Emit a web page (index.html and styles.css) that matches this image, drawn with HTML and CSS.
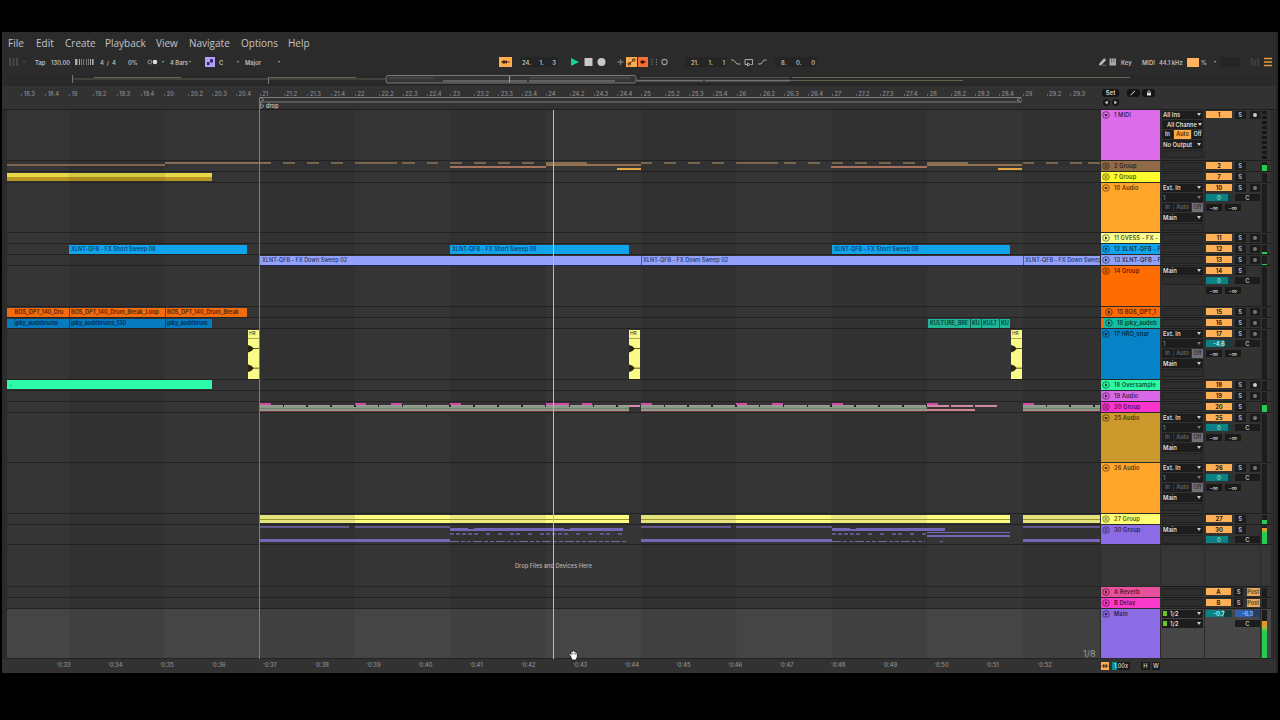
FILE: index.html
```html
<!DOCTYPE html>
<html lang="en">
<head>
<meta charset="utf-8">
<title>Arrangement</title>
<link rel="stylesheet" href="styles.css">
</head>
<body>
<div class="app">
  <nav class="menu"><span>File</span><span>Edit</span><span>Create</span><span>Playback</span><span>View</span><span>Navigate</span><span>Options</span><span>Help</span></nav>
  <div class="toolbar">
    <svg class="dim" width="10" height="8"><path d="M0 0h2v8H0zM3.500 0h2v8h-2zM7 0h2v8H7z" fill="#484848"/></svg>
    <i class="arr dimmed"></i>
    <span>Tap</span>
    <span>130.00</span>
    <svg width="9" height="6"><path d="M0 0h2.500v6H0zM4 0h1v6H4zM6 0h.6v6H6zM8 0h.6v6H8z" fill="#aaa"/></svg>
    <svg width="9" height="6"><path d="M0 0h.6v6H0zM2 0h.6v6H2zM4 0h1v6H4zM6 0h1.600v6H6z" fill="#aaa"/></svg>
    <span>4&nbsp; / &nbsp;4</span>
    <span>0%</span>
    <svg width="12" height="6"><circle cx="2.800" cy="3" r="1.900" fill="none" stroke="#aaa" stroke-width=".8"/><circle cx="8" cy="3" r="2.300" fill="#ddd"/></svg>
    <i class="arr"></i>
    <span>4 Bars</span>
    <i class="arr"></i>
    <svg width="10" height="10"><path d="M0 0h10v10H0z" fill="#b39dff"/><path d="M2 5h2.500v3H2zM5 2.200h3v3.300H5z" fill="#2d2466"/></svg>
    <span>C</span>
    <i class="arr"></i>
    <span>Major</span>
    <i class="arr"></i>
    <svg width="13" height="10"><path d="M0 0h13v10H0z" fill="#ffab52"/><path d="M2 5h9" stroke="#6b3c10" stroke-width="1"/><circle cx="5" cy="5" r="1.700" fill="#3a2208"/><path d="M7.500 3.500v3" stroke="#3a2208"/></svg>
    <span class="field pos"><b>24.</b><b>1.</b><b>3</b></span>
    <svg width="12" height="10"><path d="M2 1l8 4-8 4z" fill="#16d38b"/></svg>
    <svg width="9" height="10"><path d="M.5 1h8v8h-8z" fill="#c8c8c8"/></svg>
    <svg width="9" height="10"><circle cx="4.500" cy="5" r="4" fill="#c8c8c8"/></svg>
    <svg width="9" height="10"><path d="M1.500 5h6M4.500 2v6" stroke="#777" stroke-width="1.300"/></svg>
    <svg width="11" height="10"><path d="M0 0h11v10H0z" fill="#ffab52"/><path d="M3 7L7.500 3" stroke="#5b3510" stroke-width="1"/><circle cx="3.200" cy="7" r="1.300" fill="none" stroke="#5b3510"/><circle cx="7.800" cy="3" r="1.300" fill="none" stroke="#5b3510"/></svg>
    <svg width="10" height="10"><path d="M0 0h10v10H0z" fill="#f4713b"/><path d="M2 5h6" stroke="#5b1c08"/><circle cx="4.500" cy="5" r="1.800" fill="#3b1205"/></svg>
    <svg width="9" height="10"><path d="M2 2v6M6.500 2v6" fill="none" stroke="#777" stroke-dasharray="1.500 1"/></svg>
    <svg width="8" height="10"><circle cx="3.500" cy="5" r="2.600" fill="none" stroke="#999" stroke-width="1.100"/></svg>
    <span class="field pos wide"><b>21.</b><b>1.</b><b>1</b></span>
    <svg width="10" height="10"><path d="M0 3h2.500L6 7h3.500" fill="none" stroke="#aaa"/></svg>
    <svg width="10" height="10"><path d="M3 7.500H1V2.500h7.500v5H6.500M3.500 6v3l2.500-1.500z" fill="none" stroke="#aaa"/></svg>
    <svg width="10" height="10"><path d="M1 7h3L7 3h2.500" fill="none" stroke="#aaa"/></svg>
    <span class="field pos wide"><b>8.</b><b>0.</b><b>0</b></span>
    <svg width="8" height="10"><path d="M0 8h2l5-5-2-1.500L1 6zM3 8.300h4" fill="#bbb" stroke="#bbb" stroke-width=".5"/></svg>
    <svg width="8" height="10"><path d="M.5 1.500h6.500v7H.5z" fill="#aaa"/><path d="M2.600 2v3.500M4.900 2v3.500" stroke="#555" stroke-width=".8"/></svg>
    <span>Key</span>
    <span>MIDI</span>
    <span>44.1 kHz</span>
    <i class="cpu"></i>
    <span>%</span>
    <i class="arr"></i>
    <i class="field blank"></i>
    <svg width="9" height="8"><path d="M1 0v8M4 2v6M7 0v8" stroke="#5a4a5a" stroke-width="1"/></svg>
    <svg width="8" height="10"><path d="M0 1.500h8M0 5h8M0 8.500h8" stroke="#e59a3a" stroke-width="1.300"/></svg>
  </div>
  <svg class="overview" width="1272" height="12" viewBox="2 74 1272 12">
    <path d="M7 75h379v9H7zM637 75h635v9H637z" fill="#292929"/>
    <path d="M73 79h312M637 81h153" stroke="#484b42" stroke-width="1.500"/>
    <path d="M94 77.500h87M268 77.500h88M792 77.500h338" stroke="#646a54" stroke-width="1"/>
    <path d="M790 80.500h173" stroke="#5f664e"/>
    <path d="M443 81h84M529 81h86M637 80.500h66M705 80.500h85" stroke="#716e77" stroke-width="1.500"/>
    <path d="M389 78h44M530 78h100M640 77.500h150" stroke="#525155"/>
    <path d="M72.500 75v8M268.500 77v7" stroke="#777"/>
    <path d="M509.500 75v8" stroke="#aaa"/>
    <rect x="386" y="75.500" width="250" height="7.500" rx="2" fill="#77777722" stroke="#777"/>
    <path d="M7 84.500h1265" stroke="#242424"/>
  </svg>
  <div class="ruler">
    <div class="ticks" id="ticks"></div>
    <div class="loop"><svg width="763" height="8"><path d="M.5 8V1.500h761.500v4.500H.5" fill="none" stroke="#7b7b7b"/><path d="M1 1.500l4 2.200-4 2.300M762 1.500l-4 2.200 4 2.300" fill="#2a2a2a" stroke="#999" stroke-width=".8"/></svg></div>
    <div class="locator"><svg width="5" height="6"><path d="M.7.5L4 3 .7 5.500z" fill="none" stroke="#aaa" stroke-width=".8"/></svg>drop</div>
    <div class="tools">
      <div class="pills"><span class="pill set">Set</span><span class="pill"><svg width="8" height="6"><path d="M1.500 5L6 1" stroke="#ddd"/></svg></span><span class="pill"><svg width="8" height="6"><path d="M2 2.800h4v2.700H2z" fill="#ddd"/><path d="M2.900 3V1h2.200v2" fill="none" stroke="#ddd" stroke-width=".7"/></svg></span></div>
      <div class="pills nav"><span class="dot"><svg width="5" height="5"><path d="M3.700.6v3.800L.8 2.500z" fill="#ccc"/></svg></span><span class="dot"><svg width="5" height="5"><path d="M1.300.6v3.800l2.900-1.900z" fill="#ccc"/></svg></span></div>
    </div>
  </div>
  <div class="arrange">
    <div class="tracks" id="tracks"></div>
    <div class="clips" id="clips"></div>
    <div class="drop">Drop Files and Devices Here</div>
    <div class="line start"></div>
    <div class="line play"></div>
    <div class="grid-size">1/8</div>
    <svg class="hand" width="10" height="11" viewBox="0 0 10 11"><path d="M2.500 6L1 4.500 2 3.500l1 1V1.500l1-.5.800.500.700-1 1 .5.300 1 .9-.2.600.700V3l1 .3V7L8 10H4z" fill="#fff" stroke="#111" stroke-width=".8"/><path d="M4.500 2.500v2M6 2.500v2M7.500 3v2" stroke="#333" stroke-width=".5"/></svg>
  </div>
  <div class="footer">
    <div class="times" id="times"></div>
    <div class="foot-tools"><i class="foot-icon"><svg width="8" height="8"><path d="M.5 4h7M2.800 2v4M5.200 2v4" stroke="#222" stroke-width=".9"/></svg></i><span class="zoom">1.00x</span><span class="key">H</span><span class="key">W</span></div>
  </div>
</div>
<script src="app.js"></script>
</body>
</html>
```
FILE: styles.css
```css
* { box-sizing: border-box; }
body { margin: 0; width: 1280px; height: 720px; overflow: hidden; background: #000; padding: 32px 2px 0; font-family: "Inter", "Liberation Sans", sans-serif; font-size: 6px; color: #bdbdbd; }
svg { display: block; flex: none; }
.app { width: 1276px; height: 641px; background: #2b2b2c; display: flex; flex-direction: column; border-right: 2px solid #252525; overflow: hidden; }
.menu { height: 23px; padding: 0 6px 2px; display: grid; grid-template-columns: 28px 29px 40px 51px 33px 52px 47px 40px; align-items: center; font-family: "Open Sans", "Noto Sans", sans-serif; font-size: 10px; color: #c4c4c4; }
.toolbar { height: 14px; margin-left: 7px; display: grid; align-items: center; font-weight: 600; font-size: 5.800px; white-space: nowrap;
  grid-template-columns: 14px 12px 16px 24px 11px 14px 28px 19px 15px 8px 19px 16px 14px 18px 8px 33px 221px 22px 48px 15px 13px 19px 10px 12px 12px 11px 24px 46px 13px 13px 18px 324px 10px 12px 21px 17px 28px 14px 13px 6px 31px 13px 10px; }
.arr { width: 0; height: 0; border: 1.500px solid transparent; border-top: 2px solid #aaa; border-bottom: 0; }
.dimmed { opacity: .4; }
.field { background: #252525; height: 10px; }
.pos { width: 37px; display: flex; justify-content: space-between; align-items: center; padding: 0 2px 0 1px; }
.wide { width: 42px; padding-left: 6px; }
.pos b { font-weight: 600; }
.blank { width: 20px; }
.cpu { width: 12px; height: 9px; background: #ffb45c; }
.overview { margin-top: 5px; }
.ruler { height: 24px; position: relative; background: #323233; border-bottom: 1px solid #1f1f1f; }
.ticks { margin-left: 18.300px; width: 1079px; display: flex; height: 12px; align-items: flex-end; font-size: 5.700px; font-weight: 500; color: #909090; overflow: hidden; padding-bottom: 1px; }
.ticks span { flex: 0 0 23.850px; padding-left: 1px; line-height: 7px; white-space: nowrap; }
.ticks span::before { content: ""; display: inline-block; width: 1px; height: 2px; background: #666; margin-right: 1.500px; }
.loop { margin-left: 257px; height: 7px; margin-top: -2px; overflow: hidden; }
.locator { margin-left: 258px; display: flex; gap: 1px; align-items: center; height: 6px; font-size: 5.600px; font-weight: 600; color: #c0c0c0; line-height: 6px; }
.tools { position: absolute; left: 1100px; top: 2px; }
.pills { display: flex; gap: 2.500px; height: 9px; align-items: center; }
.pill { background: #151515; border-radius: 3px; height: 8px; width: 13px; display: flex; align-items: center; justify-content: center; color: #ddd; font-size: 6px; font-weight: 600; }
.set { width: 17px; margin-right: 5px; }
.nav { margin: 1px 0 0 1px; gap: 2px; }
.dot { width: 7px; height: 7px; border-radius: 4px; background: #151515; display: flex; align-items: center; justify-content: center; }
.arrange { position: relative; height: 549px; flex: none; }
.track { display: grid; grid-template-columns: 1093px 59px 43px 55px 10px; column-gap: 1px; margin-left: 5px; }
.lane { background: linear-gradient(90deg, #313132 50%, #353535 50%) 62px 0 / 190.800px 100%; border-bottom: 1px solid #222; }
.spacer .lane { border-bottom-color: #262626; }
.main .lane { background-image: linear-gradient(90deg, #404040 50%, #454545 50%); }
.head { margin-bottom: 1px; padding: .5px 0 0 1px; display: flex; align-items: flex-start; gap: 4px; overflow: hidden; white-space: nowrap; line-height: 8px; color: #000b; font-size: 5.700px; font-weight: 600; }
.head span { letter-spacing: .1px; }
.nested .head { margin-left: 3px; box-shadow: -3px 0 #f96a05; }
.io, .mix { background: #323232; border-bottom: 1px solid #1d1d1d; display: flex; flex-direction: column; overflow: hidden; }
.main .io, .main .mix, .main .meter { background: #464646; }
.spacer .io, .spacer .mix, .spacer .head, .spacer .meter { background: #363636; }
.io { padding: .5px 1px 0; gap: 1px; }
.sel { flex: none; height: 8.800px; background: #1d1d1d; display: flex; align-items: center; justify-content: space-between; padding: 0 2px 0 1px; color: #ddd; font-size: 5.900px; font-weight: 600; white-space: nowrap; }
.sel::after { content: ""; border: 2px solid transparent; border-top: 3px solid #ccc; border-bottom: 0; }
.sel.off { color: #777; }
.sel.off::after { border-top-color: #777; }
.sel.sub { padding: 0 1px 0 5px; font-size: 5.700px; }
.sel.out { justify-content: flex-start; gap: 3px; }
.sel.out::after { margin-left: auto; }
.sel.out i { width: 4px; height: 5px; background: #6cc52c; }
.empty { flex: none; height: 8.500px; background: #2d2d2d; border: 1px solid #222; }
.monitor { flex: none; height: 8.800px; display: flex; gap: 1px; font-size: 5.500px; line-height: 9px; text-align: center; color: #666; }
.monitor b { font-weight: 600; background: #1d1d1d; flex: 1; }
.monitor b:nth-child(2) { flex: 1.600; }
.monitor b:nth-child(3) { background: #70707a; color: #333; }
.monitor.on { color: #ddd; }
.monitor.on b:nth-child(2) { background: #ffab45; color: #432b0a; }
.monitor.on b:nth-child(3) { background: #1d1d1d; color: #ddd; }
.mix { padding: 1px 0 0 1px; gap: 2px; }
.mrow { display: flex; flex: none; height: 7.800px; align-items: center; line-height: 8px; text-align: center; font-size: 5.800px; font-weight: 600; color: #bbb; }
.num { width: 26px; height: 7px; line-height: 7.500px; background: #ffb057; color: #2c1c08; margin-right: 3px; font-weight: 700; }
.btn { width: 10.500px; height: 8px; background: #1c1c1c; margin-right: 4px; flex: none; }
.btn.rec { margin-right: 0; display: flex; align-items: center; justify-content: center; }
.btn.rec::before { content: ""; width: 4px; height: 4px; border-radius: 2px; background: #777; }
.btn.rec.lit::before { background: #ccc; }
.returns .btn { width: 9px; margin-right: 3.500px; }
.hidden { visibility: hidden; }
.post { width: 14px; background: #e6a95d; color: #5b3b14; height: 8px; font-size: 5.500px; }
.vol { width: 26px; height: 7px; line-height: 7.500px; background: linear-gradient(90deg, #0a8285 84%, #163d40 84%); color: #7ed6d6; margin-right: 3px; }
.vol.low { background: linear-gradient(90deg, #0a8285 68%, #163d40 68%); color: #ccefef; }
.pan { width: 25px; height: 7px; background: #1c1c1c; }
.cue { width: 25px; height: 7px; background: linear-gradient(90deg, #2d62ae 65%, #253e68 65%); color: #9ac0ff; }
.send { width: 16px; height: 7px; line-height: 7px; background: #1a1a1a; margin-right: 3px; }
.meter { background: #323232; border-bottom: 1px solid #1d1d1d; padding: 1px 1px 0; display: flex; align-items: flex-end; }
.well { width: 4.500px; height: 100%; background: #1c1c1c; display: flex; align-items: flex-end; }
.well i { width: 100%; background: #28c950; }
.well.hot i { background: linear-gradient(#e6952b 0 10%, #9dbe3b 18%, #28c950 30%); }
.well.dots { background: repeating-linear-gradient(#171717 0 3px, #303030 3px 5px); }
.clips { position: absolute; left: 0; top: 0; width: 1098px; height: 549px; overflow: hidden; }
.clip { position: absolute; overflow: hidden; white-space: nowrap; color: #001a3cbb; font-size: 5.500px; line-height: 9px; font-weight: 600; padding-left: 2px; }
.bar { position: absolute; }
.hit { position: absolute; width: 11px; background: #fafa86; color: #333; font-size: 4.800px; line-height: 7.500px; padding-left: 1px; overflow: hidden; }
.drop { position: absolute; left: 513px; top: 451px; font-size: 5.700px; line-height: 9px; color: #b5b5b5; font-weight: 500; white-space: nowrap; }
.line { position: absolute; top: 0; width: 1px; height: 549px; }
.start { left: 257px; top: -9px; height: 558px; background: #7e7e7e; }
.play { left: 551px; background: #bcbcbc; }
.grid-size { position: absolute; left: 1081px; top: 538px; font-size: 9px; color: #999; }
.hand { position: absolute; left: 566px; top: 540px; }
.footer { height: 14px; display: flex; background: #323232; }
.times { margin-left: 54.500px; width: 1044.500px; display: flex; font-size: 5.700px; font-weight: 500; color: #929292; line-height: 11px; overflow: hidden; }
.times span { flex: 0 0 51.650px; }
.times span::before { content: "'"; font-size: 5px; }
.foot-tools { display: flex; height: 8px; margin-top: 3px; font-size: 5.700px; font-weight: 500; line-height: 8px; color: #ddd; text-align: center; }
.foot-icon { width: 8px; background: #ffae4d; margin-right: 3px; }
.zoom { width: 18px; background: linear-gradient(90deg, #0a8c94 30%, #1a1a1a 30%); margin-right: 11px; }
.key { width: 8.500px; background: #1a1a1a; margin-right: 2px; }
```
FILE: app.js
```js
const ORIGIN_X = 2, ORIGIN_Y = 110;

// name, colour, height, icon, options
const tracks = [
  ["1 MIDI", "#dd6ceb", 51, "down", { io: "midi", num: "1", rec: "lit", dots: 1 }],
  ["2 Group", "#916b48", 11, "group", { num: "2", level: 65 }],
  ["7 Group", "#fffb2c", 11, "group", { num: "7" }],
  ["10 Audio", "#ffa529", 50, "down", { io: "audio", num: "10", rec: "on", vol: "0", send: 1 }],
  ["11 GVESS - FX -", "#fbff8f", 11, "right", { num: "11", rec: "on" }],
  ["12 XLNT-QFB - F", "#10a4ed", 11, "right", { num: "12", rec: "on", level: 25 }],
  ["13 XLNT-QFB - F", "#8fa2fb", 11, "right", { num: "13", rec: "on", level: 12 }],
  ["14 Group", "#ff6d02", 41, "group", { io: "group", num: "14", vol: "0", send: 1 }],
  ["15 BOS_DPT_1", "#f96a05", 11, "right", { num: "15", rec: "on", nested: 1 }],
  ["16 jpky_audeb", "#12bda1", 11, "right", { num: "16", rec: "on", nested: 1 }],
  ["17 HRO_snar", "#0683c7", 51, "down", { io: "audio", num: "17", rec: "on", vol: "-4.6", low: 1, send: 1 }],
  ["18 Oversample", "#2df8a5", 11, "right", { num: "18", rec: "lit" }],
  ["19 Audio", "#d968e8", 11, "right", { num: "19", rec: "on" }],
  ["20 Group", "#fb34cf", 11, "group", { num: "20", level: 75 }],
  ["25 Audio", "#cc992c", 50, "down", { io: "audio", num: "25", rec: "on", vol: "0", send: 1 }],
  ["26 Audio", "#ffa529", 51, "down", { io: "audio", num: "26", rec: "on", vol: "0", send: 1 }],
  ["27 Group", "#ffff72", 11, "group", { num: "27", level: 45 }],
  ["30 Group", "#8b6ce4", 20, "group", { io: "group", num: "30", vol: "0", level: 90, hot: 1 }],
  ["", "", 42, "", { spacer: 1 }],
  ["A Reverb", "#e9509b", 11, "right", { num: "A", post: 1 }],
  ["B Delay", "#fa3acb", 11, "right", { num: "B", post: 1 }],
  ["Main", "#8b6ce4", 50, "down", { io: "main", main: 1, level: 78, hot: 1 }]
];

const marks = {
  down: '<path d="M2.200 3.300h3.600L4 5.700z" fill="#000c"/>',
  right: '<path d="M3 2.200v3.600L5.600 4z" fill="#000c"/>',
  group: '<path d="M2.500 3h3M2.500 5h3" stroke="#000b" stroke-width=".9"/>'
};
const icon = k => `<svg width="8" height="8"><circle cx="4" cy="4" r="3.300" fill="none" stroke="#0009" stroke-width=".8"/>${marks[k]}</svg>`;
const monitor = on => `<div class="monitor ${on}"><b>In</b><b>Auto</b><b>Off</b></div>`;
const ios = {
  midi: '<div class="sel">All Ins</div><div class="sel sub">All Channe</div>' + monitor("on") + '<div class="sel">No Output</div><div class="empty"></div>',
  audio: '<div class="sel">Ext. In</div><div class="sel off">1</div>' + monitor("") + '<div class="sel">Main</div><div class="empty"></div>',
  group: '<div class="sel">Main</div><div class="empty"></div>',
  main: '<div class="sel out"><i></i>1/2</div><div class="sel out"><i></i>1/2</div>'
};

function mixer(o) {
  if (o.spacer) return "";
  if (o.main) return '<div class="mrow"><span class="vol low">-0.7</span><span class="cue">-6.3</span></div><div class="mrow"><span class="vol hidden"></span><span class="pan">C</span></div>';
  let h = `<div class="mrow ${o.post ? "returns" : ""}"><span class="num">${o.num}</span><span class="btn">S</span>`;
  if (o.rec) h += `<span class="btn rec ${o.rec}"></span>`;
  if (o.post) h += '<span class="post">Post</span>';
  h += "</div>";
  if (o.vol) h += `<div class="mrow"><span class="vol ${o.low ? "low" : ""}">${o.vol}</span><span class="pan">C</span></div>`;
  if (o.send) h += '<div class="mrow"><span class="send">-∞</span><span class="send">-∞</span></div>';
  return h;
}

document.getElementById("tracks").innerHTML = tracks.map(([name, color, h, mark, o]) => {
  const cls = ["track", o.nested && "nested", o.spacer && "spacer", o.main && "main"].filter(Boolean).join(" ");
  const io = o.spacer ? "" : (ios[o.io] || '<div class="empty"></div>');
  const well = o.spacer ? "" : `<div class="well ${o.hot ? "hot" : ""} ${o.dots ? "dots" : ""}"><i style="height:${o.level || 0}%"></i></div>`;
  return `<div class="${cls}" style="height:${h}px"><div class="lane"></div><div class="head" style="background:${color}">${mark ? icon(mark) : ""}<span>${name}</span></div><div class="io">${io}</div><div class="mix">${mixer(o)}</div><div class="meter">${well}</div></div>`;
}).join("");

let out = "";
const box = (x1, x2, y, h) => `left:${x1 - ORIGIN_X}px;width:${x2 - x1}px;top:${y - ORIGIN_Y}px;height:${h}px`;
const bar = (x1, x2, y, h, c) => { out += `<div class="bar" style="${box(x1, x2, y, h)};background:${c}"></div>`; };
const clip = (x1, x2, y, h, c, t, ink) => { out += `<div class="clip" style="${box(x1, x2, y, h)};background:${c};${ink ? "color:" + ink : ""}">${t}</div>`; };

// 2 Group
const brown = "#866d52";
bar(7, 165, 164, 2, "#7d6651");
bar(165, 271, 162, 2, brown);
[[283, 295], [307, 319], [331, 343], [355, 397], [402, 415], [427, 438], [450, 462], [474, 486], [498, 510], [522, 534],
 [641, 652], [664, 676], [688, 700], [712, 724], [736, 778], [784, 796], [808, 820], [832, 843], [855, 867], [879, 891], [903, 915],
 [1023, 1034], [1046, 1058], [1070, 1082], [1088, 1100]].forEach(([a, b]) => bar(a, b, 162, 2, "#79654e"));
[546, 927].forEach(x => {
  bar(x - 96, x, 166, 1.5, "#a6705c");
  bar(x, x + 41, 162, 3, brown);
  bar(x, x + 95, 164, 2, "#95724f");
  bar(x + 71, x + 95, 168, 2, "#e2a63f");
});

// 7 Group
bar(7, 212, 173, 4, "#e6d849");
bar(7, 212, 177, 4, "#b8951f");
bar(69, 165, 173, 8, "#00000012");

// sweeps
[[69, 247], [450, 629], [832, 1010]].forEach(([a, b]) => clip(a, b, 245, 9, "#11a3ec", "XLNT-QFB - FX Short Sweep 08"));
[[260, 641], [641, 1023], [1023, 1100]].forEach(([a, b]) => clip(a, b, 256, 9, "#93a1fa", "XLNT-QFB - FX Down Sweep 02"));
bar(260, 1100, 264.5, 1.5, "#1e2858");
[641, 1023].forEach(x => bar(x, x + 1, 256, 9, "#4c569c"));
bar(553, 554, 256, 9, "#4c569c");

// loops
clip(7, 69, 308, 8.5, "#f26b0e", "&nbsp;&nbsp;&nbsp; BOS_DPT_140_Dru", "#541f00");
clip(69, 165, 308, 8.5, "#f26b0e", "BOS_DPT_140_Drum_Break_Loop", "#541f00");
clip(165, 247, 308, 8.5, "#f26b0e", "BOS_DPT_140_Drum_Break", "#541f00");
clip(7, 69, 319, 8.5, "#087bbf", "&nbsp;&nbsp;&nbsp; jpky_audebrums", "#002746");
clip(69, 165, 319, 8.5, "#087bbf", "jpky_audebrums_130", "#002746");
clip(165, 212, 319, 8.5, "#087bbf", "jpky_audebrum", "#002746");
[69, 165].forEach(x => { bar(x, x + 1, 308, 8.5, "#80390a"); bar(x, x + 1, 319, 8.5, "#044a77"); });
clip(928, 970, 319, 8.5, "#1fb698", "KULTURE_BRE", "#003b36");
clip(970, 981, 319, 8.5, "#1fb698", "KU", "#003b36");
clip(981, 999, 319, 8.5, "#1fb698", "KULT", "#003b36");
clip(999, 1010, 319, 8.5, "#1fb698", "KU", "#003b36");
[970, 981, 999].forEach(x => bar(x, x + 1, 319, 8.5, "#0a5b50"));

// snare hits
[248, 629, 1011].forEach(x => {
  out += `<div class="hit" style="left:${x - ORIGIN_X}px;top:219.5px;height:49px">HR<svg width="11" height="40" style="margin-left:-1px"><path d="M0 1.500h11" stroke="#aaa85a"/><path d="M0 8q4 1 5.500 3.200H11v.8H5.500Q4 14.500 0 15.500zM0 27.500q4 1 5.500 3.200H11v.8H5.500Q4 34 0 35z" fill="#26260f"/></svg></div>`;
});

clip(7, 212, 380, 9, "#2cfba9", "..", "#065c3a");

// 20 Group
[[260, 629], [641, 927], [1023, 1100]].forEach(([a, b]) => {
  bar(a, b, 405, 6, "#8b9b88");
  bar(a, b, 405, 1, "#a2989a");
  bar(a, b, 408, 1, "#76806f");
  bar(a, b, 411, 1, "#7c3346");
  for (let x = a + 22.5; x < b; x += 23.85) bar(x, x + 1.5, 405, 2, "#222");
});
bar(629, 640, 405, 2, "#d98aaf");
[[927, 949], [951, 973], [975, 997]].forEach(([a, b]) => bar(a, b, 405, 2, "#cf8ba4"));
bar(927, 975, 409, 2, "#cf8494");
[[260, 271], [355, 366], [391, 402], [450, 461], [546, 569], [582, 592], [641, 652], [736, 747], [772, 783], [832, 843], [927, 938], [1023, 1034]]
  .forEach(([a, b]) => bar(a, b, 403, 2, "#cf4ba6"));

// 27 Group
[[260, 629], [641, 1010], [1023, 1100]].forEach(([a, b]) => {
  bar(a, b, 515, 8, "#fdfc81");
  bar(a, Math.min(a + 95, b), 515, 8, "#e5e37d");
  if (b - a > 200) bar(a + 190, a + 286, 515, 8, "#ebe97e");
  bar(a, b, 519, 1, "#96942f");
});

// 30 Group
const violet = "#7667b6";
[[260, 349], [355, 450], [641, 731], [736, 832], [1023, 1100]].forEach(([a, b]) => bar(a, b, 526, 1.5, "#62588e"));
[[260, 450], [641, 832], [1023, 1100]].forEach(([a, b]) => { bar(a, b, 539, 3, violet); });
[[450, 623], [832, 945]].forEach(([a, b]) => {
  bar(a, b, 528, 3, violet);
  bar(a + 18, a + 24, 528, 1, "#333");
});
bar(564, 570, 528, 1, "#333");
bar(927, 1010, 531.5, 1.5, violet);
bar(927, 1010, 535, 1.5, violet);
[450, 832].forEach(s => {
  const end = s === 450 ? 628 : 925;
  [0, 6, 12, 18, 24, 36, 48, 60, 66, 78, 90, 96, 102, 108, 114, 126, 138, 150, 156, 168].forEach(d => {
    if (s + d < end) bar(s + d, s + d + 4, 533, 2, "#5f5687");
  });
  for (let x = s, i = 0; x < end; i++) { const w = i % 3 ? 4 : 9; bar(x, Math.min(x + w, end), 541, 1, "#71669f"); x += w + 2; }
});
bar(940, 943, 541, 1, "#71669f");
document.getElementById("clips").innerHTML = out;

// bar.beat labels, from 18.3 to 29.3
let ticks = "";
for (let b = 18 * 4 + 2; b <= 29 * 4 + 2; b++) {
  const bars = Math.floor(b / 4), beat = b % 4 + 1;
  ticks += `<span>${beat === 1 ? bars : bars + "." + beat}</span>`;
}
document.getElementById("ticks").innerHTML = ticks;

let times = "";
for (let s = 33; s <= 52; s++) times += `<span>0:${s}</span>`;
document.getElementById("times").innerHTML = times;
```
